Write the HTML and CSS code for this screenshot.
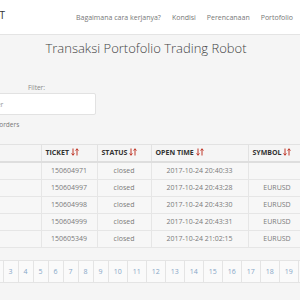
FILE: index.html
```html
<!DOCTYPE html>
<html lang="en">
<head>
    <meta charset="UTF-8">
    <meta name="viewport" content="width=device-width, initial-scale=1.0">
    <title>Transaksi Portofolio Trading Robot</title>
    <link rel="stylesheet" href="styles.css">
</head>
<body>
    <nav class="navbar">
        <div class="nav-inner">
            <div class="brand">ROBOT</div>
            <ul class="menu">
                <li>Bagaimana cara kerjanya?</li>
                <li>Kondisi</li>
                <li>Perencanaan</li>
                <li>Portofolio</li>
            </ul>
        </div>
    </nav>

    <div class="container">
        <h1>Transaksi Portofolio Trading Robot</h1>

        <div class="filter-group">
            <label for="filter">Filter:</label>
            <input type="text" id="filter" value="Filter">
        </div>
        <div class="length">Show 10 orders</div>

        <table class="orders">
            <colgroup>
                <col class="c-first">
                <col class="c-ticket">
                <col class="c-status">
                <col class="c-time">
                <col class="c-symbol">
                <col class="c-rest">
            </colgroup>
            <thead>
                <tr>
                    <th></th>
                    <th>Ticket <span class="sort"><svg viewBox="0 0 8 8" width="8" height="8"><path d="M2 0.5V7M0.6 5.4L2 7.3L3.4 5.4M6 7.5V1M4.6 2.6L6 0.7L7.4 2.6" fill="none" stroke="#c0392b" stroke-width="1"/></svg></span></th>
                    <th>Status <span class="sort"><svg viewBox="0 0 8 8" width="8" height="8"><path d="M2 0.5V7M0.6 5.4L2 7.3L3.4 5.4M6 7.5V1M4.6 2.6L6 0.7L7.4 2.6" fill="none" stroke="#c0392b" stroke-width="1"/></svg></span></th>
                    <th>Open Time <span class="sort"><svg viewBox="0 0 8 8" width="8" height="8"><path d="M2 0.5V7M0.6 5.4L2 7.3L3.4 5.4M6 7.5V1M4.6 2.6L6 0.7L7.4 2.6" fill="none" stroke="#c0392b" stroke-width="1"/></svg></span></th>
                    <th>Symbol <span class="sort"><svg viewBox="0 0 8 8" width="8" height="8"><path d="M2 0.5V7M0.6 5.4L2 7.3L3.4 5.4M6 7.5V1M4.6 2.6L6 0.7L7.4 2.6" fill="none" stroke="#c0392b" stroke-width="1"/></svg></span></th>
                    <th></th>
                </tr>
            </thead>
            <tbody>
                <tr><td></td><td>150604971</td><td>closed</td><td>2017-10-24 20:40:33</td><td></td><td></td></tr>
                <tr><td></td><td>150604997</td><td>closed</td><td>2017-10-24 20:43:28</td><td>EURUSD</td><td></td></tr>
                <tr><td></td><td>150604998</td><td>closed</td><td>2017-10-24 20:43:30</td><td>EURUSD</td><td></td></tr>
                <tr><td></td><td>150604999</td><td>closed</td><td>2017-10-24 20:43:31</td><td>EURUSD</td><td></td></tr>
                <tr><td></td><td>150605349</td><td>closed</td><td>2017-10-24 21:02:15</td><td>EURUSD</td><td></td></tr>
            </tbody>
        </table>

        <ul class="pagination">
            <li>&laquo;</li>
            <li>1</li>
            <li>2</li>
            <li>3</li>
            <li>4</li>
            <li>5</li>
            <li>6</li>
            <li>7</li>
            <li>8</li>
            <li>9</li>
            <li>10</li>
            <li>11</li>
            <li>12</li>
            <li>13</li>
            <li>14</li>
            <li>15</li>
            <li>16</li>
            <li>17</li>
            <li>18</li>
            <li>19</li>
            <li>20</li>
        </ul>
    </div>
</body>
</html>
```

FILE: styles.css
```css
html, body {
    margin: 0;
    padding: 0;
    overflow: hidden;
}
body {
    font-family: "Open Sans", Arial, sans-serif;
    background-color: #f5f5f5;
    color: #555;
    width: 300px;
    height: 300px;
}
.navbar {
    background: #fff;
    height: 34px;
    border-bottom: 1px solid #e4e4e4;
}
.nav-inner {
    display: flex;
    align-items: center;
    height: 34px;
    margin-left: -54px;
    width: 420px;
}
.brand {
    width: 59px;
    text-align: right;
    font-size: 10px;
    color: #333;
    margin-top: -4px;
}
.menu {
    display: flex;
    gap: 11px;
    list-style: none;
    margin: 0 0 0 71px;
    padding: 0;
    font-size: 7px;
    color: #777;
    white-space: nowrap;
}
.container {
    width: 400px;
    margin-left: -54px;
    padding-top: 5px;
}
h1 {
    margin: 0;
    font-size: 13px;
    line-height: 16px;
    font-weight: 300;
    color: #444;
    text-align: center;
}
.filter-group {
    display: flex;
    flex-direction: column;
    align-items: flex-start;
    gap: 1px;
    margin-top: 27px;
}
.filter-group label {
    font-size: 6.5px;
    line-height: 9px;
    color: #888;
    margin-left: 82px;
}
.filter-group input {
    box-sizing: border-box;
    width: 150px;
    height: 22px;
    border: 1px solid #e2e2e2;
    border-radius: 2px;
    background: #fff;
    font-family: "Open Sans", Arial, sans-serif;
    font-size: 7px;
    color: #999;
    padding: 0 0 0 40px;
    outline: none;
}
.length {
    margin-top: 5px;
    margin-left: 26px;
    font-size: 6.5px;
    line-height: 9px;
    color: #777;
}
.orders {
    margin-top: 15px;
    width: 400px;
    table-layout: fixed;
    border-collapse: collapse;
    font-size: 7px;
}
.c-first { width: 95px; }
.c-ticket { width: 56px; }
.c-status { width: 54px; }
.c-time { width: 97px; }
.c-symbol { width: 58px; }
.c-rest { width: 40px; }
.orders th {
    text-align: left;
    font-weight: 700;
    text-transform: uppercase;
    color: #333;
    padding: 0 0 0 4px;
    height: 16px;
    line-height: 16px;
    border-top: 1px solid #e2e2e2;
    border-bottom: 2px solid #dedede;
    border-left: 1px solid #e2e2e2;
    white-space: nowrap;
}
.orders th:first-child {
    border-left: none;
}
.sort svg {
    vertical-align: -1px;
}
.orders td {
    text-align: center;
    color: #7a7a7a;
    height: 16px;
    line-height: 16px;
    padding: 0;
    border-bottom: 1px solid #e6e6e6;
    border-left: 1px solid #e6e6e6;
    background: #f7f7f7;
    white-space: nowrap;
}
.orders td:first-child {
    border-left: none;
}
.pagination {
    display: flex;
    list-style: none;
    margin: 12px 0 0 12px;
    padding: 0;
    font-size: 7px;
}
.pagination li {
    padding: 0 5px;
    height: 21px;
    line-height: 21px;
    border: 1px solid #e4e4e4;
    border-left: none;
    background: #fafafa;
    color: #86a6c7;
}
.pagination li:first-child {
    border-left: 1px solid #e4e4e4;
}
```
